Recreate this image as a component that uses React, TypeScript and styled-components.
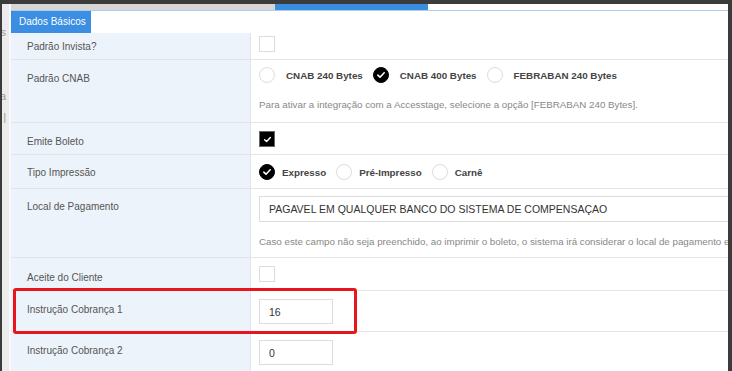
import React from "react";
import styled, { createGlobalStyle } from "styled-components";

const GlobalStyle = createGlobalStyle`
  html, body {
    margin: 0;
    padding: 0;
    background: #3b3b3b;
  }
  body {
    font-family: "Liberation Sans", Arial, sans-serif;
  }
`;

const Screen = styled.div`
  position: relative;
  width: 732px;
  height: 371px;
  box-sizing: border-box;
  padding: 4px 4px 0 2px;
  display: flex;
  overflow: hidden;
  background: #3b3b3b;
`;

const Sidebar = styled.div`
  width: 9px;
  flex-shrink: 0;
  box-sizing: border-box;
  background: #ececec;
  border-right: 2px solid #f8f8f8;
  overflow: hidden;
  display: flex;
  flex-direction: column;
  align-items: flex-end;
  padding-right: 3px;
`;

const SideGlyph = styled.span<{ $top: number }>`
  flex-shrink: 0;
  margin-top: ${(p) => p.$top}px;
  white-space: nowrap;
  font-size: 11px;
  line-height: 12px;
  color: #9a9a9a;
`;

const Main = styled.div`
  flex: 1;
  min-width: 0;
  background: #fff;
  overflow: hidden;
`;

const TabStrip = styled.div`
  height: 6px;
  display: flex;
  border-bottom: 1px solid #a9ccef;
`;

const StripTab = styled.div<{ $w: number; $bg: string }>`
  width: ${(p) => p.$w}px;
  background: ${(p) => p.$bg};
`;

const SectionTab = styled.div`
  width: 80px;
  height: 22px;
  box-sizing: border-box;
  padding-left: 8px;
  background: #3b8ee2;
  color: #fff;
  font-size: 10px;
  line-height: 21px;
`;

const Row = styled.div`
  display: grid;
  grid-template-columns: 240px 1fr;
  border-bottom: 1px solid #e4e4e4;
`;

const Label = styled.div<{ $pt: number }>`
  box-sizing: border-box;
  background: #edf3fa;
  border-right: 1px solid #e1e4e8;
  padding: ${(p) => p.$pt}px 0 0 16px;
  font-size: 10px;
  line-height: 13px;
  color: #555;
`;

const Value = styled.div<{ $pt: number; $pb: number }>`
  min-width: 0;
  overflow: hidden;
  padding: ${(p) => p.$pt}px 0 ${(p) => p.$pb}px 8px;
`;

const Box = styled.div<{ $checked?: boolean }>`
  width: 16px;
  height: 16px;
  box-sizing: border-box;
  border: 1px solid ${(p) => (p.$checked ? "#666" : "#dcdcdc")};
  background: ${(p) => (p.$checked ? "#000" : "#fff")};
  display: flex;
  align-items: center;
  justify-content: center;
`;

const RadioGroup = styled.div`
  height: 18px;
  display: flex;
  align-items: center;
`;

const RadioItem = styled.div<{ $gap: number }>`
  display: flex;
  align-items: center;
  gap: ${(p) => p.$gap}px;
  margin-right: 10px;
  font-size: 9.8px;
  font-weight: 700;
  color: #444;
`;

const Circle = styled.div<{ $checked?: boolean }>`
  width: 16px;
  height: 16px;
  box-sizing: border-box;
  border-radius: 50%;
  border: 1px solid ${(p) => (p.$checked ? "#000" : "#dcdcdc")};
  background: ${(p) => (p.$checked ? "#000" : "#fff")};
  display: flex;
  align-items: center;
  justify-content: center;
`;

const Help = styled.div<{ $mt: number; $mb?: number }>`
  margin: ${(p) => p.$mt}px 0 ${(p) => p.$mb ?? 0}px;
  font-size: 9.75px;
  line-height: 14px;
  color: #888;
  white-space: nowrap;
`;

const TextInput = styled.div<{ $w: number; $h: number }>`
  width: ${(p) => p.$w}px;
  height: ${(p) => p.$h}px;
  box-sizing: border-box;
  border: 1px solid #dcdcdc;
  padding-left: 9px;
  display: flex;
  align-items: center;
  font-size: 10.5px;
  color: #333;
  white-space: nowrap;
`;

const Highlight = styled.div`
  position: absolute;
  left: 13px;
  top: 288px;
  width: 344px;
  height: 46px;
  box-sizing: border-box;
  border: 3px solid #e8151c;
  border-radius: 3px;
`;

const Check = ({ size = 10 }: { size?: number }) => (
  <svg width={size} height={size} viewBox="0 0 10 10">
    <path d="M1.8 5.2 L4 7.2 L8.2 2.8" fill="none" stroke="#fff" strokeWidth="1.6" strokeLinecap="round" strokeLinejoin="round" />
  </svg>
);

interface RadioProps {
  label: string;
  checked?: boolean;
  gap: number;
}

function Radio({ label, checked, gap }: RadioProps) {
  return (
    <RadioItem $gap={gap}>
      <Circle $checked={checked}>{checked && <Check size={10} />}</Circle>
      {label}
    </RadioItem>
  );
}

function CheckBox({ checked }: { checked?: boolean }) {
  return <Box $checked={checked}>{checked && <Check size={9} />}</Box>;
}

export default function App() {
  return (
    <>
      <GlobalStyle />
      <Screen>
        <Sidebar>
          <SideGlyph $top={22}>s</SideGlyph>
          <SideGlyph $top={52}>a</SideGlyph>
          <SideGlyph $top={9}>|</SideGlyph>
        </Sidebar>
        <Main>
          <TabStrip>
            <StripTab $w={264} $bg="#d6d6d6" />
            <StripTab $w={153} $bg="#3a8ee0" />
          </TabStrip>
          <SectionTab>Dados Básicos</SectionTab>

          <Row>
            <Label $pt={7}>Padrão Invista?</Label>
            <Value $pt={3} $pb={7}>
              <CheckBox />
            </Value>
          </Row>

          <Row>
            <Label $pt={12}>Padrão CNAB</Label>
            <Value $pt={6} $pb={8}>
              <RadioGroup>
                <Radio label="CNAB 240 Bytes" gap={11} />
                <Radio label="CNAB 400 Bytes" gap={11} checked />
                <Radio label="FEBRABAN 240 Bytes" gap={11} />
              </RadioGroup>
              <Help $mt={14} $mb={2}>
                Para ativar a integração com a Accesstage, selecione a opção [FEBRABAN 240 Bytes].
              </Help>
            </Value>
          </Row>

          <Row>
            <Label $pt={12}>Emite Boleto</Label>
            <Value $pt={8} $pb={7}>
              <CheckBox checked />
            </Value>
          </Row>

          <Row>
            <Label $pt={11}>Tipo Impressão</Label>
            <Value $pt={8} $pb={7}>
              <RadioGroup>
                <Radio label="Expresso" gap={7} checked />
                <Radio label="Pré-Impresso" gap={7} />
                <Radio label="Carnê" gap={7} />
              </RadioGroup>
            </Value>
          </Row>

          <Row>
            <Label $pt={11}>Local de Pagamento</Label>
            <Value $pt={7} $pb={8}>
              <TextInput $w={500} $h={26}>
                PAGAVEL EM QUALQUER BANCO DO SISTEMA DE COMPENSAÇAO
              </TextInput>
              <Help $mt={13}>
                Caso este campo não seja preenchido, ao imprimir o boleto, o sistema irá considerar o local de pagamento escolhido no banco.
              </Help>
            </Value>
          </Row>

          <Row>
            <Label $pt={13}>Aceite do Cliente</Label>
            <Value $pt={8} $pb={8}>
              <CheckBox />
            </Value>
          </Row>

          <Row>
            <Label $pt={12}>Instrução Cobrança 1</Label>
            <Value $pt={8} $pb={7}>
              <TextInput $w={74} $h={25}>16</TextInput>
            </Value>
          </Row>

          <Row>
            <Label $pt={12}>Instrução Cobrança 2</Label>
            <Value $pt={8} $pb={8}>
              <TextInput $w={74} $h={25}>0</TextInput>
            </Value>
          </Row>
        </Main>
        <Highlight />
      </Screen>
    </>
  );
}
